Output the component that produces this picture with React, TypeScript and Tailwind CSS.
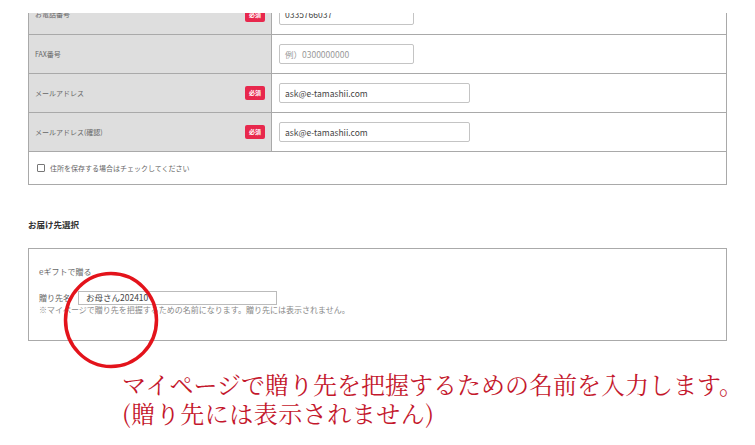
import React from "react";

const sans = { fontFamily: '"Noto Sans CJK JP", "Noto Sans", sans-serif' };

function Badge() {
  return (
    <span className="flex h-[14px] w-[20px] items-center justify-center rounded-[2px] bg-[#e8284d] text-[6px] font-bold leading-none text-white">
      必須
    </span>
  );
}

function Row({
  label,
  required,
  children,
}: {
  label: string;
  required?: boolean;
  children: React.ReactNode;
}) {
  return (
    <div className="grid h-[39px] grid-cols-[243px_1fr] border-b border-[#a9a9a9]">
      <div className="flex items-center justify-between border-r border-[#a9a9a9] bg-[#dedede] pl-[6px] pr-[6px]">
        <span className="text-[7px] text-[#666]">{label}</span>
        {required && <Badge />}
      </div>
      <div className="flex items-center pl-[7px]">{children}</div>
    </div>
  );
}

function Field({ value, placeholder, w }: { value?: string; placeholder?: string; w: string }) {
  return (
    <div
      className={`flex h-[20px] items-center rounded-[2px] border border-[#c4c4c4] bg-white px-[5px] text-[8.5px] ${w} ${
        value ? "text-[#444]" : "text-[#999]"
      }`}
    >
      {value ?? placeholder}
    </div>
  );
}

export default function App() {
  return (
    <div className="relative h-[445px] w-[755px] overflow-hidden bg-white" style={sans}>
      <div className="pl-[28px] pt-[13px]">
        <div className="w-[699px] border-x border-b border-[#a9a9a9]">
          {/* partially scrolled first row */}
          <div className="h-[22px] overflow-hidden border-b border-[#a9a9a9]">
            <div className="-mt-[18px] grid h-[39px] grid-cols-[243px_1fr]">
              <div className="flex items-center justify-between border-r border-[#a9a9a9] bg-[#dedede] pl-[6px] pr-[6px]">
                <span className="text-[7px] text-[#666]">お電話番号</span>
                <Badge />
              </div>
              <div className="flex items-center pl-[7px]">
                <Field value="0335766037" w="w-[135px]" />
              </div>
            </div>
          </div>
          <Row label="FAX番号">
            <Field placeholder="例）0300000000" w="w-[135px]" />
          </Row>
          <Row label="メールアドレス" required>
            <Field value="ask@e-tamashii.com" w="w-[191px]" />
          </Row>
          <Row label="メールアドレス(確認)" required>
            <Field value="ask@e-tamashii.com" w="w-[191px]" />
          </Row>
          <div className="flex h-[32px] items-center gap-[5px] pl-[8px]">
            <span className="h-[8px] w-[8px] rounded-[1px] border border-[#777] bg-white" />
            <span className="text-[7px] text-[#666]">住所を保存する場合はチェックしてください</span>
          </div>
        </div>

        <div className="mt-[35px] text-[8.5px] font-bold leading-none text-[#333]">お届け先選択</div>

        <div className="mt-[19px] h-[93px] w-[699px] border border-[#aaaaaa] pl-[10px] pt-[19px]">
          <div className="text-[8px] leading-none text-[#666]">eギフトで贈る</div>
          <div className="mt-[15px] flex items-center gap-[7px]">
            <span className="text-[8px] text-[#666]">贈り先名</span>
            <div className="flex h-[14px] w-[199px] items-center border border-[#bbb] bg-white pl-[7px] text-[8.5px] text-[#444]">
              お母さん202410
            </div>
          </div>
          <div className="mt-[1px] text-[8px] leading-none text-[#888]">
            ※マイページで贈り先を把握するための名前になります。贈り先には表示されません。
          </div>
        </div>

        <div
          className="mt-[28px] pl-[94px] text-[24px] leading-[29px] text-[#c4172c]"
          style={{ fontFamily: '"Noto Serif CJK JP", "Noto Serif JP", "Noto Sans CJK JP", serif' }}
        >
          <div>マイページで贈り先を把握するための名前を入力します。</div>
          <div className="tracking-[0.5px]">(贈り先には表示されません)</div>
        </div>
      </div>

      <svg className="absolute left-[63px] top-[271px]" width="96" height="98" viewBox="0 0 96 98">
        <ellipse cx="48" cy="49" rx="45.5" ry="46.5" fill="none" stroke="#e3131b" strokeWidth="3.5" />
      </svg>
    </div>
  );
}
